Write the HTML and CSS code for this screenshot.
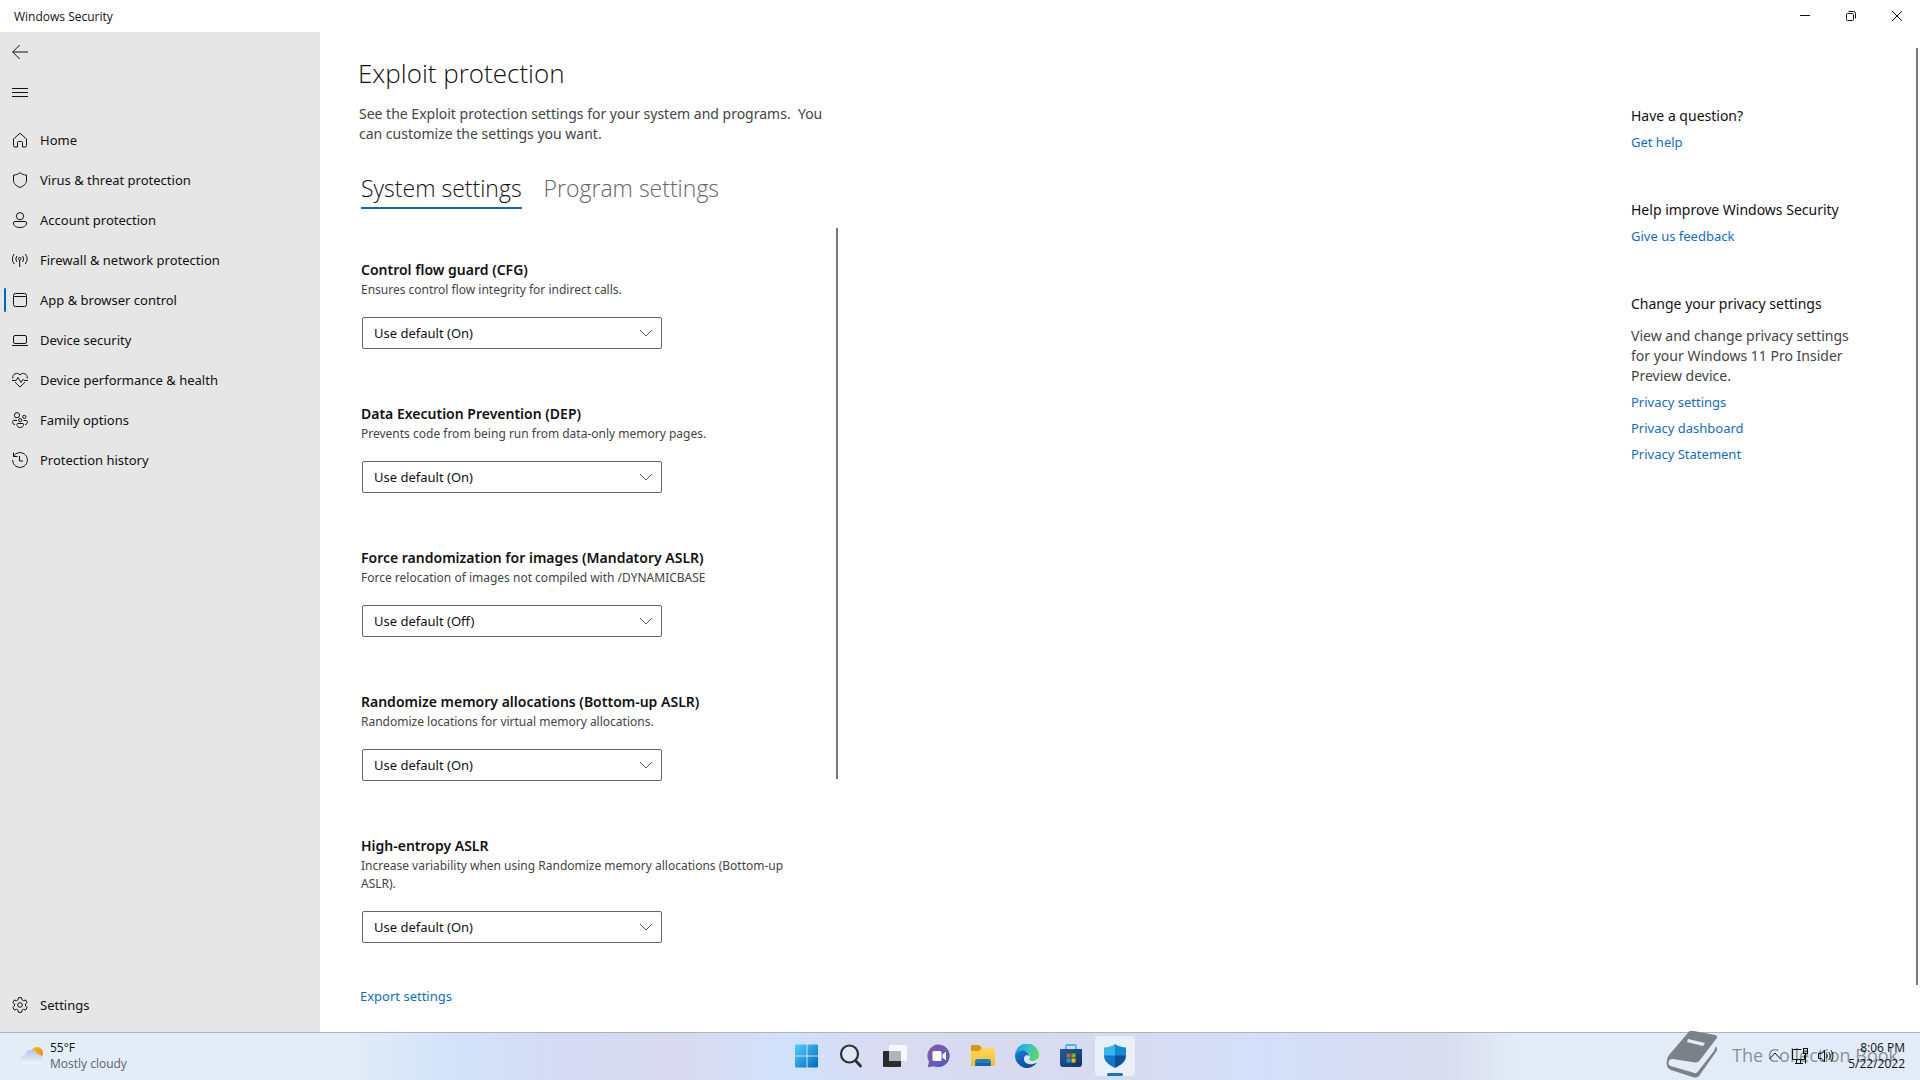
FILE: index.html
```html
<!DOCTYPE html>
<html lang="en">
<head>
    <meta charset="UTF-8">
    <meta name="viewport" content="width=device-width, initial-scale=1.0">
    <title>Windows Security</title>
    <link rel="stylesheet" href="styles.css">
</head>
<body>
    <header class="titlebar">
        <span class="app-name">Windows Security</span>
        <div class="window-buttons">
            <button type="button" aria-label="Minimize"><svg width="12" height="12" viewBox="0 0 12 12"><path d="M1 5.5h10"/></svg></button>
            <button type="button" aria-label="Restore"><svg width="12" height="12" viewBox="0 0 12 12"><rect x="1.5" y="3.5" width="7" height="7" rx="1"/><path d="M3.5 1.5h5a2 2 0 0 1 2 2v5"/></svg></button>
            <button type="button" aria-label="Close"><svg width="12" height="12" viewBox="0 0 12 12"><path d="M1 1l10 10M11 1L1 11"/></svg></button>
        </div>
    </header>

    <div class="window">
        <nav class="sidebar">
            <button type="button" class="nav-button" aria-label="Back"><svg class="icon" viewBox="0 0 16 16"><path d="M.7 8H16M7.7 1L.7 8l7 7"/></svg></button>
            <button type="button" class="nav-button" aria-label="Menu"><svg class="icon" viewBox="0 0 16 16"><path d="M0 4.5h16M0 8.5h16M0 12.5h16"/></svg></button>
            <ul class="nav-list">
                <li><a href="#"><svg class="icon" viewBox="0 0 16 16"><path d="M1.5 7L8 1.2 14.500 7v6.500a1.500 1.500 0 0 1-1.500 1.500h-2.500V10.500a1 1 0 0 0-1-1h-3a1 1 0 0 0-1 1V15H3a1.500 1.500 0 0 1-1.500-1.500z"/></svg>Home</a></li>
                <li><a href="#"><svg class="icon" viewBox="0 0 16 16"><path d="M8 .7c2 1.600 4.200 2.300 6.500 2.400V8c0 3.600-2.300 5.900-6.500 7.400C3.800 13.900 1.500 11.600 1.500 8V3.100C3.800 3 6 2.300 8 .7z"/></svg>Virus &amp; threat protection</a></li>
                <li><a href="#"><svg class="icon" viewBox="0 0 16 16"><circle cx="8" cy="4.200" r="3.600"/><path d="M3 9.500h10a1.500 1.500 0 0 1 1.500 1.500c0 3-2.800 4.500-6.500 4.500S1.500 14 1.500 11A1.500 1.500 0 0 1 3 9.500z"/></svg>Account protection</a></li>
                <li><a href="#"><svg class="icon" viewBox="0 0 16 16"><path d="M2.300 2a8 8 0 0 0 0 10M4.900 4a5 5 0 0 0 0 6M13.200 2a8 8 0 0 1 0 10M10.600 4a5 5 0 0 1 0 6M7.700 8v7"/><circle cx="7.700" cy="6.700" r="1.300"/></svg>Firewall &amp; network protection</a></li>
                <li><a href="#" class="selected"><svg class="icon" viewBox="0 0 16 16"><rect x="1.500" y="1.500" width="13" height="13" rx="2"/><path d="M1.500 4.500h13"/></svg>App &amp; browser control</a></li>
                <li><a href="#"><svg class="icon" viewBox="0 0 16 16"><rect x="1.500" y="3.500" width="13" height="8" rx="1.500"/><path d="M0 13.500h16"/></svg>Device security</a></li>
                <li><a href="#"><svg class="icon" viewBox="0 0 16 16"><path d="M.9 6.500C-.1 1.500 5.500-.2 8 3c2.500-3.200 8.100-1.500 7.100 3.500M3 10.200l5 4.800 5-4.800M0 8.500h4l2-3 3 5 2-3.200 1 1.200h4"/></svg>Device performance &amp; health</a></li>
                <li><a href="#"><svg class="icon" viewBox="0 0 16 16"><circle cx="5" cy="3.200" r="2.600"/><circle cx="12.300" cy="4.800" r="1.600"/><circle cx="8.200" cy="8.200" r="1.600"/><path d="M5 8.500H1.500C0 8.500.3 12.500 3 12.800M11.500 8.500h3c1.600 0 1.200 4-1.500 4.300M5.500 11.500h5.500c1 0 1 4-2.800 4s-3.700-4-2.700-4z"/></svg>Family options</a></li>
                <li><a href="#"><svg class="icon" viewBox="0 0 16 16"><path d="M1.500.5v4h4M1.600 4.300A7.400 7.400 0 1 1 .6 8M7.500 4v5H11"/></svg>Protection history</a></li>
            </ul>
            <a href="#" class="settings-link"><svg class="icon" viewBox="0 0 16 16"><circle cx="8" cy="8" r="2.300"/><path d="M6.500.7h3l.5 2.100 1.500.9 2.100-.7 1.500 2.600L13.500 7v2l1.600 1.400-1.500 2.600-2.100-.7-1.500.9-.5 2.100h-3L6 13.200l-1.500-.9-2.100.7L.9 10.400 2.500 9V7L.9 5.600 2.400 3l2.100.7L6 2.800z" stroke-linejoin="round"/></svg>Settings</a>
        </nav>

        <main class="content">
            <h1>Exploit protection</h1>
            <p class="intro">See the Exploit protection settings for your system and programs.&nbsp; You can customize the settings you want.</p>

            <div class="tabs" role="tablist">
                <button type="button" role="tab" aria-selected="true" class="active">System settings</button>
                <button type="button" role="tab" aria-selected="false">Program settings</button>
            </div>

            <div class="settings-panel">
                <div class="settings-list">
                    <section class="setting">
                        <label for="cfg">Control flow guard (CFG)</label>
                        <p>Ensures control flow integrity for indirect calls.</p>
                        <div class="dropdown">
                            <select id="cfg"><option>Use default (On)</option></select>
                            <svg width="12" height="8" viewBox="0 0 12 8"><path d="M0 1l6 6 6-6"/></svg>
                        </div>
                    </section>
                    <section class="setting">
                        <label for="dep">Data Execution Prevention (DEP)</label>
                        <p>Prevents code from being run from data-only memory pages.</p>
                        <div class="dropdown">
                            <select id="dep"><option>Use default (On)</option></select>
                            <svg width="12" height="8" viewBox="0 0 12 8"><path d="M0 1l6 6 6-6"/></svg>
                        </div>
                    </section>
                    <section class="setting">
                        <label for="mandatory">Force randomization for images (Mandatory ASLR)</label>
                        <p>Force relocation of images not compiled with /DYNAMICBASE</p>
                        <div class="dropdown">
                            <select id="mandatory"><option>Use default (Off)</option></select>
                            <svg width="12" height="8" viewBox="0 0 12 8"><path d="M0 1l6 6 6-6"/></svg>
                        </div>
                    </section>
                    <section class="setting">
                        <label for="bottomup">Randomize memory allocations (Bottom-up ASLR)</label>
                        <p>Randomize locations for virtual memory allocations.</p>
                        <div class="dropdown">
                            <select id="bottomup"><option>Use default (On)</option></select>
                            <svg width="12" height="8" viewBox="0 0 12 8"><path d="M0 1l6 6 6-6"/></svg>
                        </div>
                    </section>
                    <section class="setting">
                        <label for="entropy">High-entropy ASLR</label>
                        <p>Increase variability when using Randomize memory allocations (Bottom-up ASLR).</p>
                        <div class="dropdown">
                            <select id="entropy"><option>Use default (On)</option></select>
                            <svg width="12" height="8" viewBox="0 0 12 8"><path d="M0 1l6 6 6-6"/></svg>
                        </div>
                    </section>
                </div>
                <div class="list-scroll"></div>
            </div>

            <a href="#" class="export">Export settings</a>
        </main>

        <aside class="help">
            <section>
                <h2>Have a question?</h2>
                <a href="#">Get help</a>
            </section>
            <section>
                <h2>Help improve Windows Security</h2>
                <a href="#">Give us feedback</a>
            </section>
            <section>
                <h2>Change your privacy settings</h2>
                <p>View and change privacy settings for your Windows 11 Pro Insider Preview device.</p>
                <a href="#">Privacy settings</a>
                <a href="#">Privacy dashboard</a>
                <a href="#">Privacy Statement</a>
            </section>
        </aside>
        <div class="page-scroll"></div>
    </div>

    <footer class="taskbar">
        <button type="button" class="weather">
            <svg width="24" height="20" viewBox="0 0 24 20">
                <defs>
                    <linearGradient id="sun" x1="0" y1="0" x2="1" y2="1"><stop offset="0" stop-color="#fcc419"/><stop offset="1" stop-color="#f07c00"/></linearGradient>
                    <linearGradient id="cloud" x1="0" y1="0" x2="0" y2="1"><stop offset="0" stop-color="#b4c6e2"/><stop offset="1" stop-color="#eef4fb"/></linearGradient>
                </defs>
                <circle cx="17" cy="7" r="6" fill="url(#sun)"/>
                <path d="M5 18a4.500 4.500 0 0 1 0-9 6.500 6.500 0 0 1 12.500-1A5 5 0 0 1 18 18z" fill="url(#cloud)"/>
            </svg>
            <span class="weather-text"><span>55°F</span><span class="condition">Mostly cloudy</span></span>
        </button>

        <div class="apps">
            <button type="button" aria-label="Start"><svg width="24" height="24" viewBox="0 0 24 24">
                <defs><linearGradient id="win" x1="0" y1="0" x2="1" y2="1"><stop offset="0" stop-color="#4fd0f8"/><stop offset="1" stop-color="#0068c0"/></linearGradient></defs>
                <path d="M0 1.500Q0 .5 1 .5h10.500v11H0zM12.500.500H22q1 0 1 1v10H12.500zM0 12.500h11.500v11H1q-1 0-1-1zM12.500 12.500H23v10q0 1-1 1h-9.500z" fill="url(#win)"/></svg></button>
            <button type="button" aria-label="Search"><svg width="24" height="24" viewBox="0 0 24 24"><circle cx="10.500" cy="10" r="8.500" fill="#e9edf6" fill-opacity=".6" stroke="#2b2f36" stroke-width="2.200"/><path d="M16.500 16.500l5 5.500" stroke="#2b2f36" stroke-width="2.800" stroke-linecap="round"/></svg></button>
            <button type="button" aria-label="Task view"><svg width="24" height="24" viewBox="0 0 24 24"><rect x="0" y="7" width="18" height="16" rx="1" fill="#2a2b2d"/><rect x="6" y="1" width="18" height="16" rx="1" fill="#fff" fill-opacity=".8"/><path d="M6 7h12v10H6z" fill="#b4b4b6"/></svg></button>
            <button type="button" aria-label="Chat"><svg width="24" height="24" viewBox="0 0 24 24">
                <defs><linearGradient id="chat" x1="0" y1="0" x2="1" y2="1"><stop offset="0" stop-color="#8a5aa8"/><stop offset="1" stop-color="#5059c9"/></linearGradient></defs>
                <path d="M12 .5A11.300 11.300 0 1 1 7 22.200L.8 23.200 2 17.500A11.300 11.300 0 0 1 12 .5z" fill="url(#chat)"/><rect x="5.500" y="7" width="9" height="10" rx="1.500" fill="#fff"/><path d="M15.500 10.500L19 7.500v9l-3.500-3z" fill="#fff"/></svg></button>
            <button type="button" aria-label="File Explorer"><svg width="24" height="24" viewBox="0 0 24 24">
                <defs><linearGradient id="folder" x1="0" y1="0" x2="0" y2="1"><stop offset="0" stop-color="#ffd85e"/><stop offset="1" stop-color="#f9bd28"/></linearGradient></defs>
                <path d="M0 2q0-1 1-1h7l3 3v5H0z" fill="#d39a0c"/><path d="M0 7h8l3-3h12q1 0 1 1v16q0 1-1 1H1q-1 0-1-1z" fill="url(#folder)"/><path d="M4 22v-4q0-3 3-3h10q3 0 3 3v4z" fill="#1b7fc9"/><path d="M5 19h14v3H5z" fill="#1367a8"/></svg></button>
            <button type="button" aria-label="Microsoft Edge"><svg width="24" height="24" viewBox="0 0 24 24">
                <defs>
                    <linearGradient id="edge-top" x1="0" y1=".3" x2="1" y2=".5"><stop offset="0" stop-color="#1ea5e8"/><stop offset=".5" stop-color="#2fc2c8"/><stop offset="1" stop-color="#5cdc5c"/></linearGradient>
                    <linearGradient id="edge-low" x1="0" y1="0" x2=".6" y2="1"><stop offset="0" stop-color="#1580d8"/><stop offset="1" stop-color="#0d4a94"/></linearGradient>
                </defs>
                <path d="M0 12A12 12 0 0 1 24 11c0 3.500-2.500 6-6.500 6-2.500 0-4-1-3.200-2.200C17 11 12 5.500 6.500 7.500 3 8.700.5 10.500 0 12z" fill="url(#edge-top)"/>
                <path d="M0 12c.4-4 6-6.500 10-5 3 1.200 4.500 3.500 4.200 5.500-2-2-5.700-.5-5.200 3 .6 4.500 7 6.500 13 3A12 12 0 0 1 0 12z" fill="url(#edge-low)"/>
                <path d="M9 15c-.2-3.500 3.500-5 5.300-2.700.5.800.3 1.700-.2 2.500-.8 1.300 1 2.200 3.400 2.200 2 0 3.500-.6 4.700-1.600l.3 1.900C16 21 9.500 19.500 9 15z" fill="#d9e6f7"/></svg></button>
            <button type="button" aria-label="Microsoft Store"><svg width="24" height="24" viewBox="0 0 24 24">
                <defs><linearGradient id="store" x1="0" y1="0" x2="1" y2="1"><stop offset="0" stop-color="#1d5fa3"/><stop offset="1" stop-color="#12315f"/></linearGradient></defs>
                <path d="M7 6V2.500Q7 1 8.500 1h7Q17 1 17 2.500V6" fill="none" stroke="#45b9ec" stroke-width="1.800"/><path d="M1 5h22v15q0 3-3 3H4q-3 0-3-3z" fill="url(#store)"/><path d="M7.500 9.500h4v4h-4z" fill="#f25022"/><path d="M12.500 9.500h4v4h-4z" fill="#7fba00"/><path d="M7.500 14.500h4v4h-4z" fill="#00a4ef"/><path d="M12.500 14.500h4v4h-4z" fill="#ffb900"/></svg></button>
            <button type="button" class="open" aria-label="Windows Security"><svg width="24" height="24" viewBox="0 0 24 24"><path d="M12 0c-3 2.300-7 3.400-11 3.500V12h11z" fill="#35b6ee"/><path d="M12 0c3 2.300 7 3.400 11 3.500V12H12z" fill="#1787d8"/><path d="M1 11.500c0 5.800 4.500 9.500 11 12.500V11.500z" fill="#1276cb"/><path d="M23 11.500c0 5.800-4.500 9.500-11 12.500V11.500z" fill="#0b5296"/></svg></button>
        </div>

        <div class="watermark">
            <svg width="52" height="48" viewBox="0 0 52 48"><path d="M24 0q2-1 4 0l21 4q3 1 1.500 3.500L34 29q-2 3-5 2.500L7 28q-3.500-.5-4.500 3-.5 3 2 4l24 7q2 .500 3-1L48 20l1.500-4.500q2 1 1.500 4L33 45q-2 2-5 1.500L5 39Q-1 36 1 29q0-2 2-5L21 3q1-2 3-3zM22 8l-1 3 16 4 2-3z" fill="#7c8187" fill-rule="evenodd"/></svg>
            <span>The Collection Book</span>
        </div>

        <div class="tray">
            <button type="button" aria-label="Show hidden icons"><svg width="14" height="16" viewBox="0 0 14 16"><path d="M1.500 11L7 5l5.500 6"/></svg></button>
            <button type="button" aria-label="Network"><svg width="16" height="16" viewBox="0 0 16 16"><path d="M9.500 1.500h-9v10h12V7M4.500 11.500v4M8.500 11.500v4M3 15.500h8M13.500 6v9.500"/><rect x="11.500" y=".5" width="4" height="5"/><path d="M11.500 3h4"/></svg></button>
            <button type="button" aria-label="Volume"><svg width="16" height="16" viewBox="0 0 16 16"><path d="M.5 5.500h3l3-3.500v12l-3-3.500h-3zM8.500 6a3 3 0 0 1 0 4M10.700 4a6 6 0 0 1 0 8M12.900 2.200a9 9 0 0 1 0 11.600"/></svg></button>
            <button type="button" class="clock"><span>8:06 PM</span><span>5/22/2022</span></button>
        </div>
    </footer>
</body>
</html>
```
FILE: styles.css
```css
* {
    box-sizing: border-box;
}
body {
    margin: 0;
    min-height: 100vh;
    display: flex;
    flex-direction: column;
    font-family: "Noto Sans", "Open Sans", sans-serif;
    font-size: 13px;
    line-height: 20px;
    color: #111;
    background-color: #fff;
}
h1, h2, p, ul {
    margin: 0;
    padding: 0;
    font-weight: normal;
}
a {
    color: #0f6fc0;
    text-decoration: none;
}
button {
    font: inherit;
    color: inherit;
    background: none;
    border: none;
    padding: 0;
}
svg {
    display: block;
    flex-shrink: 0;
}

/* title bar */
.titlebar {
    height: 32px;
    padding-left: 14px;
    display: flex;
    align-items: center;
    justify-content: space-between;
}
.app-name {
    padding-top: 2px;
    font-family: "Open Sans", sans-serif;
    font-size: 12px;
}
.window-buttons {
    display: flex;
}
.window-buttons button {
    width: 46px;
    height: 32px;
    display: flex;
    align-items: center;
    justify-content: center;
}
.window-buttons svg, .icon, .dropdown svg, .tray svg {
    fill: none;
    stroke: #111;
}
.window {
    flex: 1;
    display: flex;
}

/* sidebar */
.sidebar {
    width: 320px;
    padding-bottom: 7px;
    display: flex;
    flex-direction: column;
    background-color: #e6e6e6;
}
.icon {
    width: 16px;
    height: 16px;
}
.nav-button {
    height: 40px;
    padding-left: 12px;
    display: flex;
    align-items: center;
}
.nav-list {
    flex: 1;
    margin-top: 8px;
    list-style: none;
}
.sidebar a {
    position: relative;
    height: 40px;
    padding-left: 12px;
    display: flex;
    align-items: center;
    gap: 12px;
    color: #111;
}
.sidebar a.selected::before {
    content: "";
    position: absolute;
    left: 4px;
    top: 8px;
    width: 2px;
    height: 24px;
    border-radius: 1px;
    background-color: #0067c0;
}

/* main column */
.content {
    width: 520px;
    padding: 21px 0 23px 38px;
}
h1 {
    font-family: "Open Sans", sans-serif;
    font-size: 26px;
    font-weight: 300;
    line-height: 40px;
}
.intro {
    width: 472px;
    margin: 11px 0 0 1px;
    font-size: 14px;
    color: #444;
}
.tabs {
    margin: 28px 0 0 3px;
    display: flex;
    gap: 22px;
}
.tabs button {
    height: 37px;
    padding-bottom: 4px;
    border-bottom: 2px solid transparent;
    font-family: "Open Sans", sans-serif;
    font-size: 23px;
    font-weight: 300;
    line-height: 30px;
    color: #666;
}
.tabs .active {
    color: #111;
    border-bottom-color: #1668b0;
}
.settings-panel {
    margin: 19px 0 0 3px;
    display: flex;
    justify-content: space-between;
}
.settings-list {
    width: 445px;
    padding-top: 32px;
    display: flex;
    flex-direction: column;
    gap: 55px;
}
.setting label {
    display: block;
    font-size: 14px;
    font-weight: 600;
}
.setting p {
    margin-top: 1px;
    font-size: 12px;
    line-height: 18px;
    color: #444;
}
.dropdown {
    position: relative;
    width: 300px;
    margin: 18px 0 0 1px;
}
.dropdown select {
    width: 100%;
    height: 32px;
    padding: 0 11px;
    font: inherit;
    color: #111;
    background-color: #fff;
    border: 1px solid #666;
    border-radius: 2px;
    appearance: none;
}
.dropdown svg {
    position: absolute;
    top: 12px;
    right: 10px;
    stroke: #555;
    pointer-events: none;
}
.list-scroll {
    width: 2px;
    margin: 0 2px 164px 0;
    background-color: #777;
}
.export {
    display: inline-block;
    margin: 43px 0 0 2px;
}

/* help column */
.help {
    width: 230px;
    margin: 74px 55px 0 auto;
    display: flex;
    flex-direction: column;
    gap: 48px;
}
.help section {
    display: flex;
    flex-direction: column;
    align-items: flex-start;
    gap: 6px;
}
.help h2 {
    font-size: 14px;
}
.help p {
    margin-top: 6px;
    font-size: 14px;
    color: #444;
}
.page-scroll {
    width: 2px;
    margin: 16px 2px 47px 0;
    background-color: #777;
}

/* taskbar */
.taskbar {
    position: relative;
    height: 48px;
    padding-bottom: 1px;
    display: grid;
    grid-template-columns: 1fr auto 1fr;
    align-items: center;
    font-family: "Open Sans", sans-serif;
    font-size: 12px;
    line-height: 16px;
    border-top: 1px solid #a9b3c4;
    background: linear-gradient(to right, #e2edf8 0, #e3edf8 18%, #d2e2fa 24%, #d5dbf4 29%, #d9daee 35%, #d0e1fb 41%, #d9dbf0 47%, #d7dbf1 59%, #d3dff9 66%, #d6dcf2 71%, #d9dcee 75%, #e1ecf8 79%, #e2ecf8 100%);
}
.weather {
    justify-self: start;
    padding-left: 20px;
    display: flex;
    align-items: center;
    gap: 6px;
    text-align: left;
}
.weather-text, .clock {
    display: flex;
    flex-direction: column;
}
.condition {
    color: #5b6270;
}
.apps {
    padding-left: 2px;
    display: flex;
    gap: 4px;
}
.apps button {
    position: relative;
    width: 40px;
    height: 40px;
    display: flex;
    align-items: center;
    justify-content: center;
}
.apps .open {
    border-radius: 4px;
    background-color: #ebeff8;
}
.apps .open::after {
    content: "";
    position: absolute;
    left: 12px;
    bottom: 0;
    width: 16px;
    height: 3px;
    border-radius: 2px;
    background-color: #1573c4;
}
.tray {
    position: relative;
    justify-self: end;
    padding-right: 15px;
    display: flex;
    align-items: center;
    gap: 10px;
}
.clock {
    margin-left: 4px;
    text-align: right;
}
.watermark {
    position: absolute;
    right: 22px;
    bottom: 1px;
    display: flex;
    align-items: center;
    gap: 14px;
    font-size: 18px;
    color: #8b9198;
}
```
